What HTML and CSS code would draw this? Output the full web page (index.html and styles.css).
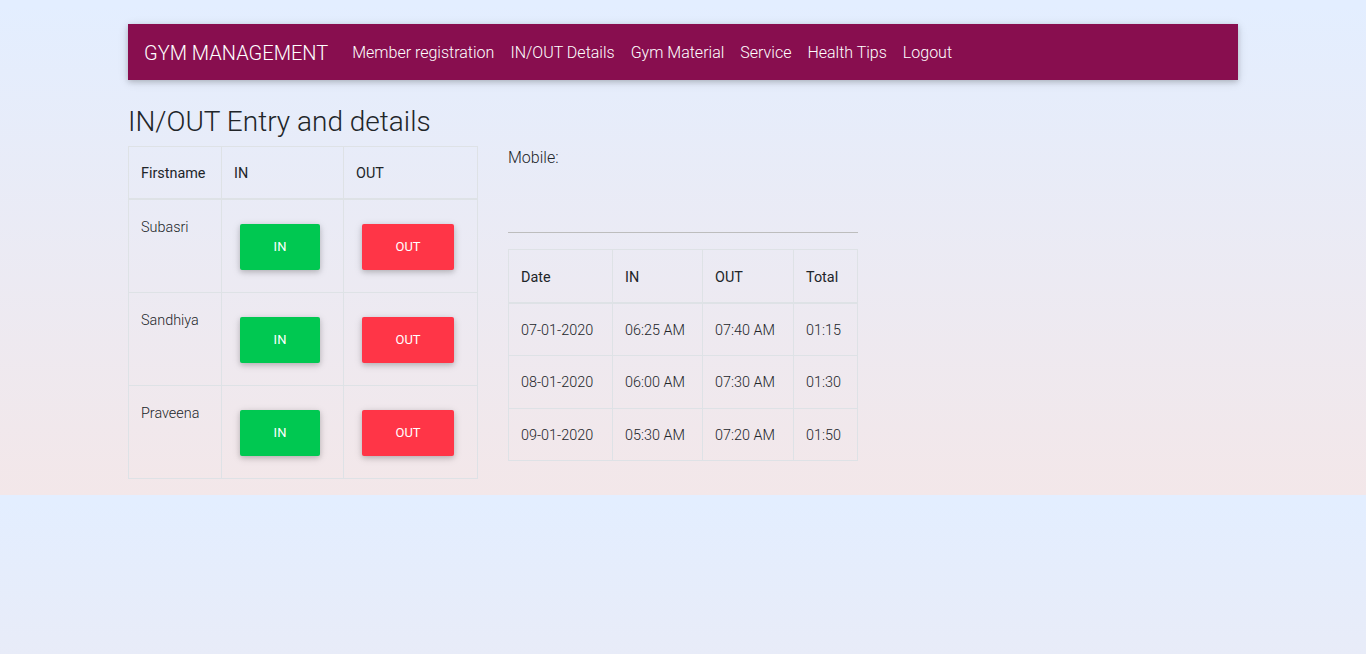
FILE: index.html
```html
<!DOCTYPE html>
<html lang="en">
<head>
<meta charset="utf-8">
<title>GYM MANAGEMENT - IN/OUT Details</title>
<link rel="stylesheet" href="styles.css">
</head>
<body>
<div class="container">
  <nav class="navbar">
    <a class="brand" href="#">GYM MANAGEMENT</a>
    <ul class="nav-links">
      <li><a href="#">Member registration</a></li>
      <li><a href="#">IN/OUT Details</a></li>
      <li><a href="#">Gym Material</a></li>
      <li><a href="#">Service</a></li>
      <li><a href="#">Health Tips</a></li>
      <li><a href="#">Logout</a></li>
    </ul>
  </nav>

  <h3 class="page-title">IN/OUT Entry and details</h3>

  <div class="row">
    <div class="col">
      <table class="tbl tbl-members">
        <thead>
          <tr>
            <th class="c-name">Firstname</th>
            <th class="c-in">IN</th>
            <th class="c-out">OUT</th>
          </tr>
        </thead>
        <tbody>
          <tr>
            <td class="name">Subasri</td>
            <td class="center"><button class="btn btn-in">IN</button></td>
            <td class="center"><button class="btn btn-out">OUT</button></td>
          </tr>
          <tr>
            <td class="name">Sandhiya</td>
            <td class="center"><button class="btn btn-in">IN</button></td>
            <td class="center"><button class="btn btn-out">OUT</button></td>
          </tr>
          <tr>
            <td class="name">Praveena</td>
            <td class="center"><button class="btn btn-in">IN</button></td>
            <td class="center"><button class="btn btn-out">OUT</button></td>
          </tr>
        </tbody>
      </table>
    </div>
    <div class="col">
      <div class="mobile">Mobile:</div>
      <hr class="divider">
      <table class="tbl tbl-details">
        <thead>
          <tr>
            <th class="c-date">Date</th>
            <th class="c-tin">IN</th>
            <th class="c-tout">OUT</th>
            <th class="c-total">Total</th>
          </tr>
        </thead>
        <tbody>
          <tr><td>07-01-2020</td><td>06:25 AM</td><td>07:40 AM</td><td>01:15</td></tr>
          <tr><td>08-01-2020</td><td>06:00 AM</td><td>07:30 AM</td><td>01:30</td></tr>
          <tr><td>09-01-2020</td><td>05:30 AM</td><td>07:20 AM</td><td>01:50</td></tr>
        </tbody>
      </table>
    </div>
  </div>
</div>
</body>
</html>
```

FILE: styles.css
```css
* { box-sizing: border-box; }

html {
  margin: 0;
}

body {
  margin: 0;
  font-family: Roboto, "Liberation Sans", sans-serif;
  font-weight: 300;
  font-size: 16px;
  line-height: 1.5;
  color: #212529;
  background-image: linear-gradient(to top, #f3e7e9 0%, #e3eeff 99%, #e3eeff 100%);
}

.container {
  width: 1140px;
  margin: 0 auto;
  padding: 24px 15px 0;
}

/* navbar */
.navbar {
  display: flex;
  align-items: center;
  height: 56px;
  padding: 9px 16px 7px;
  background: #880e4f;
  box-shadow: 0 2px 5px 0 rgba(0,0,0,.16), 0 2px 10px 0 rgba(0,0,0,.12);
}

.brand {
  color: #fff;
  text-decoration: none;
  font-size: 20px;
  font-weight: 300;
  line-height: 30px;
  margin-right: 16px;
}

.nav-links {
  display: flex;
  list-style: none;
  margin: 0;
  padding: 0;
}

.nav-links a {
  display: block;
  padding: 8px 8px;
  color: #fff;
  text-decoration: none;
  font-size: 16px;
  font-weight: 300;
  line-height: 24px;
}

.page-title {
  margin: 25px 0 7px;
  font-size: 28px;
  font-weight: 300;
  line-height: 1.2;
}

.row {
  display: flex;
  margin: 0 -15px;
}

.col {
  width: 380px;
  padding: 0 15px;
}

/* tables */
.tbl {
  width: 350px;
  border-collapse: collapse;
  margin-bottom: 16px;
  font-size: 14.4px;
  line-height: 21px;
  table-layout: fixed;
}

.tbl th,
.tbl td {
  border: 1px solid #dee2e6;
  text-align: left;
  vertical-align: top;
}

.tbl th {
  font-weight: 400;
  border-bottom-width: 2px;
}

.tbl td {
  font-weight: 300;
}

.tbl-members th {
  padding: 16px 12px 14px;
}

.tbl-members td {
  padding: 16px 12px 16px;
}

.tbl-members td.name {
  padding-top: 17px;
}

.tbl-members td.center {
  text-align: center;
}

.tbl-details th {
  padding: 17px 12px 14px;
}

.tbl-details td {
  padding: 16px 12px 14px;
  line-height: 21.6px;
}

.c-name { width: 93px; }
.c-in { width: 122px; }
.c-out { width: 134px; }

.c-date { width: 104px; }
.c-tin { width: 90px; }
.c-tout { width: 91px; }
.c-total { width: 64px; }

/* buttons */
.btn {
  display: inline-block;
  vertical-align: top;
  height: 46px;
  margin: 8px 11px 6px 6px;
  padding: 13.3px 33.2px;
  border: 0;
  border-radius: 2px;
  font-family: Roboto, "Liberation Sans", sans-serif;
  font-size: 12.96px;
  font-weight: 400;
  line-height: 19.4px;
  color: #fff;
  text-transform: uppercase;
  box-shadow: 0 2px 5px 0 rgba(0,0,0,.16), 0 2px 10px 0 rgba(0,0,0,.12);
  cursor: pointer;
}

.btn-in { background: #00c851; }
.btn-out { background: #ff3547; }

/* right column */
.mobile {
  font-size: 16px;
  font-weight: 300;
  line-height: 24px;
  margin-bottom: 62px;
}

.divider {
  margin: 16px 0;
  border: 0;
  border-top: 1px solid #bdbdbd;
  height: 0;
}
```
